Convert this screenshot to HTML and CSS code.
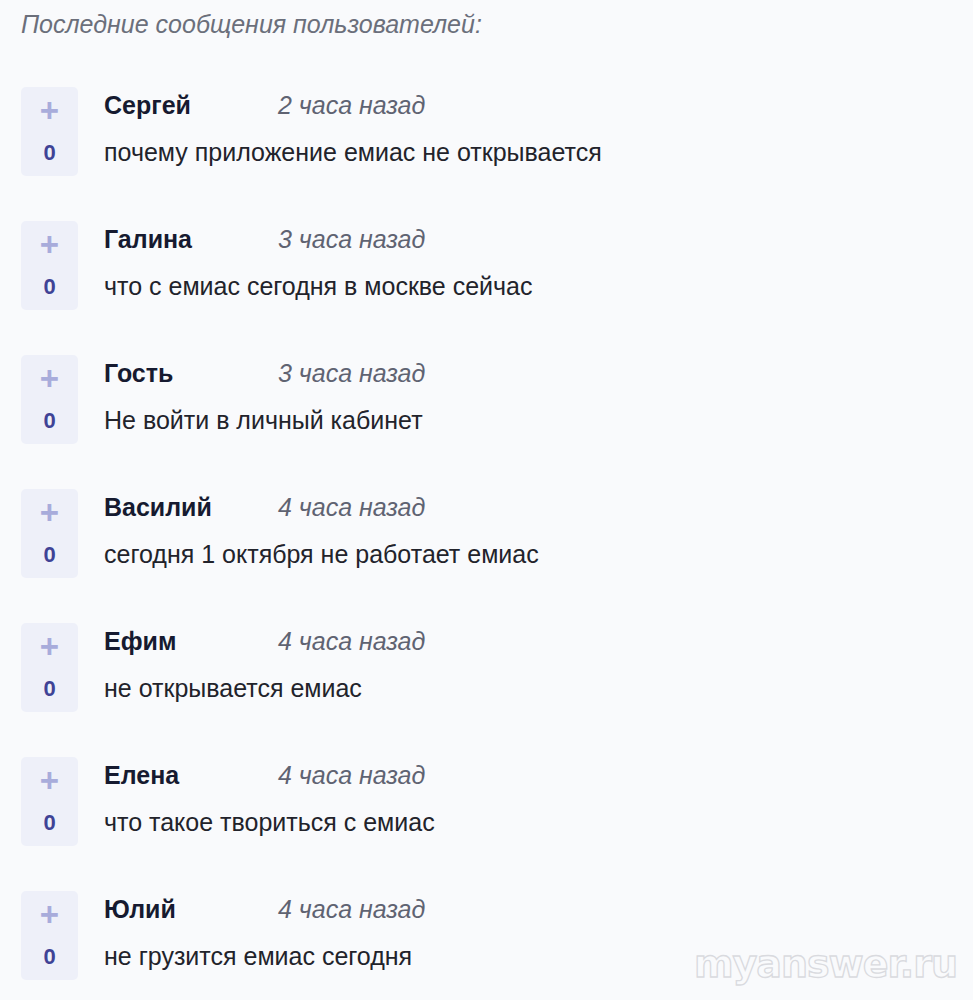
FILE: index.html
```html
<!DOCTYPE html>
<html lang="ru">
<head>
<meta charset="utf-8">
<link rel="stylesheet" href="styles.css">
</head>
<body>
<div class="page">
  <div class="title">Последние сообщения пользователей:</div>
  <div class="list">
    <div class="item">
      <div class="vote"><span class="plus">+</span><span class="count">0</span></div>
      <div class="body">
        <div class="meta"><span class="name">Сергей</span><span class="time">2 часа назад</span></div>
        <div class="text">почему приложение емиас не открывается</div>
      </div>
    </div>
    <div class="item">
      <div class="vote"><span class="plus">+</span><span class="count">0</span></div>
      <div class="body">
        <div class="meta"><span class="name">Галина</span><span class="time">3 часа назад</span></div>
        <div class="text">что с емиас сегодня в москве сейчас</div>
      </div>
    </div>
    <div class="item">
      <div class="vote"><span class="plus">+</span><span class="count">0</span></div>
      <div class="body">
        <div class="meta"><span class="name">Гость</span><span class="time">3 часа назад</span></div>
        <div class="text">Не войти в личный кабинет</div>
      </div>
    </div>
    <div class="item">
      <div class="vote"><span class="plus">+</span><span class="count">0</span></div>
      <div class="body">
        <div class="meta"><span class="name">Василий</span><span class="time">4 часа назад</span></div>
        <div class="text">сегодня 1 октября не работает емиас</div>
      </div>
    </div>
    <div class="item">
      <div class="vote"><span class="plus">+</span><span class="count">0</span></div>
      <div class="body">
        <div class="meta"><span class="name">Ефим</span><span class="time">4 часа назад</span></div>
        <div class="text">не открывается емиас</div>
      </div>
    </div>
    <div class="item">
      <div class="vote"><span class="plus">+</span><span class="count">0</span></div>
      <div class="body">
        <div class="meta"><span class="name">Елена</span><span class="time">4 часа назад</span></div>
        <div class="text">что такое твориться с емиас</div>
      </div>
    </div>
    <div class="item">
      <div class="vote"><span class="plus">+</span><span class="count">0</span></div>
      <div class="body">
        <div class="meta"><span class="name">Юлий</span><span class="time">4 часа назад</span></div>
        <div class="text">не грузится емиас сегодня</div>
      </div>
    </div>
  </div>
  <div class="watermark">myanswer.ru</div>
</div>
</body>
</html>
```
FILE: styles.css
```css
html, body {
  margin: 0;
  padding: 0;
  background: #f9fafc;
}
.page {
  position: relative;
  width: 973px;
  height: 1000px;
  overflow: hidden;
  font-family: "Liberation Sans", Arial, sans-serif;
  box-sizing: border-box;
  padding: 9px 0 0 21px;
}
.title {
  font-style: italic;
  font-size: 25px;
  color: #6b6f7b;
  line-height: 30px;
}
.list {
  display: flex;
  flex-direction: column;
  gap: 45px;
  margin-top: 48px;
}
.item {
  display: flex;
  gap: 26px;
}
.vote {
  width: 57px;
  height: 89px;
  background: #eef0f9;
  border-radius: 5px;
  display: flex;
  flex-direction: column;
  align-items: center;
  box-sizing: border-box;
  padding-top: 6px;
}
.plus {
  font-size: 33px;
  font-weight: bold;
  color: #a8acdb;
  line-height: 36px;
}
.count {
  font-size: 22px;
  font-weight: bold;
  color: #3f4396;
  line-height: 24px;
  margin-top: 12px;
}
.body {
  display: flex;
  flex-direction: column;
  padding-top: 3px;
}
.meta {
  display: flex;
  line-height: 30px;
}
.name {
  width: 174px;
  font-weight: bold;
  font-size: 25px;
  color: #161a30;
}
.time {
  font-style: italic;
  font-size: 25px;
  color: #5f6372;
}
.text {
  margin-top: 17px;
  font-size: 25px;
  line-height: 30px;
  color: #22232b;
}
.watermark {
  position: absolute;
  right: 16px;
  bottom: 14px;
  font-family: "DejaVu Sans", sans-serif;
  font-weight: bold;
  font-size: 38px;
  letter-spacing: -1px;
  color: transparent;
  -webkit-text-stroke: 1.3px #d9dadf;
}
```
